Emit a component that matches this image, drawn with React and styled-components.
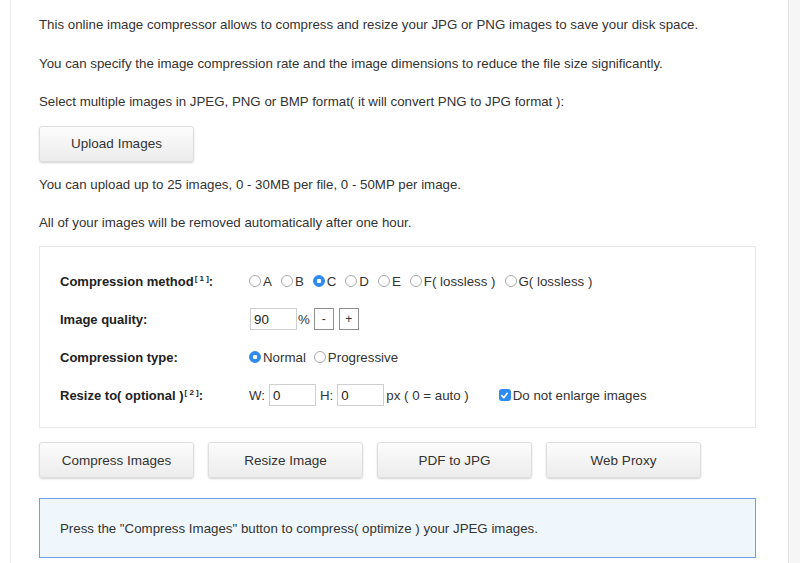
import styled, { createGlobalStyle } from 'styled-components';

const GlobalStyles = createGlobalStyle`
  html, body {
    margin: 0;
    padding: 0;
  }
  body {
    font-family: "Liberation Sans", Arial, Helvetica, sans-serif;
    font-size: 13.3px;
    color: #333;
    background: linear-gradient(to right, #fff 789px, #f6f6f6 789px);
  }
`;

function Radio({ checked, children }) {
  return (
    <Choice>
      <Dot checked={checked} />
      {children}
    </Choice>
  );
}

function App() {
  return (
    <Page>
      <GlobalStyles />
      <Main>
        <Text>This online image compressor allows to compress and resize your JPG or PNG images to save your disk space.</Text>
        <Text>You can specify the image compression rate and the image dimensions to reduce the file size significantly.</Text>
        <Text>Select multiple images in JPEG, PNG or BMP format( it will convert PNG to JPG format ):</Text>
        <Button className='upload'>Upload Images</Button>
        <Text>You can upload up to 25 images, 0 - 30MB per file, 0 - 50MP per image.</Text>
        <Text>All of your images will be removed automatically after one hour.</Text>

        <Options>
          <Row>
            <Label>Compression method<Sup>[ 1 ]</Sup>:</Label>
            <Controls gap={8}>
              <Radio>A</Radio>
              <Radio>B</Radio>
              <Radio checked>C</Radio>
              <Radio>D</Radio>
              <Radio>E</Radio>
              <Radio>F( lossless )</Radio>
              <Radio>G( lossless )</Radio>
            </Controls>
          </Row>
          <Row>
            <Label>Image quality:</Label>
            <Controls gap={0}>
              <Field value='90' readOnly />
              <Unit>%</Unit>
              <Step>-</Step>
              <Step>+</Step>
            </Controls>
          </Row>
          <Row>
            <Label>Compression type:</Label>
            <Controls gap={7}>
              <Radio checked>Normal</Radio>
              <Radio>Progressive</Radio>
            </Controls>
          </Row>
          <Row>
            <Label>Resize to( optional )<Sup>[ 2 ]</Sup>:</Label>
            <Controls gap={0}>
              <Dim>W:</Dim>
              <Field value='0' readOnly />
              <Dim>H:</Dim>
              <Field value='0' readOnly />
              <Dim>px ( 0 = auto )</Dim>
              <Check>
                <Box>
                  <svg width='9' height='9' viewBox='0 0 10 10'>
                    <path d='M2 5.2 L4.2 7.4 L8 2.6' fill='none' stroke='#fff' strokeWidth='1.8' strokeLinecap='round' strokeLinejoin='round' />
                  </svg>
                </Box>
                Do not enlarge images
              </Check>
            </Controls>
          </Row>
        </Options>

        <Actions>
          <Button>Compress Images</Button>
          <Button>Resize Image</Button>
          <Button>PDF to JPG</Button>
          <Button>Web Proxy</Button>
        </Actions>

        <Notice>Press the "Compress Images" button to compress( optimize ) your JPEG images.</Notice>
      </Main>
    </Page>
  );
}

const Page = styled.div`
  padding-left: 10px;
  min-height: 563px;
`;

const Main = styled.div`
  width: 779px;
  min-height: 563px;
  box-sizing: border-box;
  padding: 16px 0 0 28px;
  border-left: 1px solid #ededed;
  border-right: 1px solid #e4e4e4;
  background: #fff;
  display: flex;
  flex-direction: column;
  align-items: flex-start;

  .upload {
    margin: -6px 0 14px;
  }
`;

const Text = styled.p`
  margin: 0 0 20.5px;
  line-height: 18px;
  color: #333;
  &:nth-of-type(5) {
    margin-bottom: 14px;
  }
`;

const Button = styled.div`
  width: 155px;
  height: 36px;
  box-sizing: border-box;
  display: flex;
  align-items: center;
  justify-content: center;
  border: 1px solid #dedede;
  border-radius: 3px;
  background: linear-gradient(to bottom, #fcfcfc, #ececec);
  box-shadow: 0 1px 2px rgba(0, 0, 0, 0.18);
  color: #333;
  font-size: 13.5px;
`;

const Options = styled.div`
  width: 717px;
  box-sizing: border-box;
  border: 1px solid #e9e9e9;
  padding: 15px 20px 13px;
  display: flex;
  flex-direction: column;
`;

const Row = styled.div`
  height: 38px;
  display: flex;
  align-items: center;
`;

const Label = styled.div`
  width: 188px;
  font-weight: bold;
  font-size: 13px;
  color: #222;
`;

const Sup = styled.sup`
  font-size: 8px;
  font-weight: bold;
  vertical-align: 5px;
  line-height: 0;
  margin-left: 1px;
`;

const Controls = styled.div`
  display: flex;
  align-items: center;
  gap: ${p => p.gap}px;
`;

const Choice = styled.label`
  display: flex;
  align-items: center;
  gap: 2px;
  color: #333;
`;

const Dot = styled.span`
  width: 12px;
  height: 12px;
  box-sizing: border-box;
  border-radius: 50%;
  border: 1px solid ${p => (p.checked ? '#2f8af2' : '#a9a9a9')};
  background: ${p => (p.checked ? 'radial-gradient(circle, #fff 0 2px, #2f8af2 2.5px)' : '#fff')};
  margin-left: 1px;
`;

const Field = styled.input`
  width: 47px;
  height: 22px;
  box-sizing: border-box;
  border: 1px solid #cfcfcf;
  padding: 0 3px;
  font: inherit;
  color: #222;
  outline: none;
  margin: 0 3px 0 4px;
  &:first-child {
    margin-left: 2px;
  }
  &:last-of-type:not(:first-child) {
    margin-right: 1px;
  }
`;

const Unit = styled.span`
  margin: 0 4px 0 -2px;
`;

const Step = styled.div`
  width: 20px;
  height: 22px;
  box-sizing: border-box;
  border: 1px solid #8f8f8f;
  display: flex;
  align-items: center;
  justify-content: center;
  font-size: 12px;
  & + & {
    margin-left: 5px;
  }
`;

const Dim = styled.span`
  margin-left: 1px;
`;

const Check = styled.label`
  display: flex;
  align-items: center;
  gap: 2px;
  margin-left: 30px;
`;

const Box = styled.span`
  width: 12px;
  height: 12px;
  border-radius: 3px;
  background: #2f8af2;
  display: flex;
  align-items: center;
  justify-content: center;
`;

const Actions = styled.div`
  display: flex;
  gap: 14px;
  margin-top: 14px;
`;

const Notice = styled.div`
  width: 717px;
  height: 60px;
  box-sizing: border-box;
  margin-top: 20px;
  padding: 0 20px;
  display: flex;
  align-items: center;
  background: #f0f7fc;
  border: 1px solid #6e9fe8;
  color: #333;
`;

export default App;
